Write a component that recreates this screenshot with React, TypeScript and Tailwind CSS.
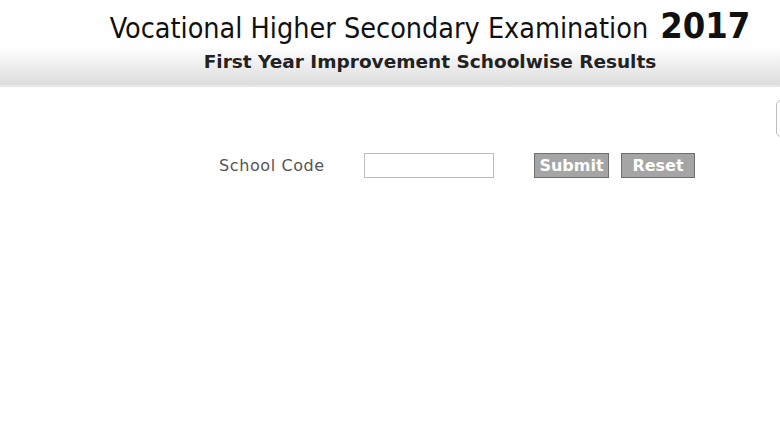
export default function App() {
  return (
    <div className="relative h-[440px] w-[780px] overflow-hidden bg-white font-['DejaVu_Sans',sans-serif]">
      {/* header */}
      <header className="h-[87px] border-b-2 border-[#e6e6e6] bg-gradient-to-b from-white from-[55%] to-[#dcdcdc]">
        <div className="flex flex-col items-center pl-[80px] pt-[8px]">
          <h1 className="flex items-baseline gap-[12px] font-stretch-condensed leading-none text-[#111]">
            <span className="text-[28.5px]">Vocational Higher Secondary Examination</span>
            <span className="text-[36px] font-bold">2017</span>
          </h1>
          <h2 className="mt-[9px] text-[18.5px] font-bold leading-none text-[#222]">
            First Year Improvement Schoolwise Results
          </h2>
        </div>
      </header>

      {/* form */}
      <div className="mt-[66px] flex items-center pl-[219px]">
        <label className="w-[145px] text-[16px] tracking-[0.6px] text-[#555]">School Code</label>
        <input type="text" className="h-[25px] w-[130px] border border-[#bdbdbd] bg-white px-1 text-[14px] outline-none" />
        <button className="ml-[40px] h-[25px] w-[75px] border border-[#6e6e6e] bg-[#a5a5a5] text-[16px] font-bold text-white">
          Submit
        </button>
        <button className="ml-[12px] h-[25px] w-[74px] border border-[#6e6e6e] bg-[#a5a5a5] text-[16px] font-bold text-white">
          Reset
        </button>
      </div>

      {/* clipped floating box at right edge */}
      <div className="absolute left-[776px] top-[100px] h-[37px] w-[20px] rounded-[5px] border border-[#bdbdbd] bg-white" />
    </div>
  );
}
